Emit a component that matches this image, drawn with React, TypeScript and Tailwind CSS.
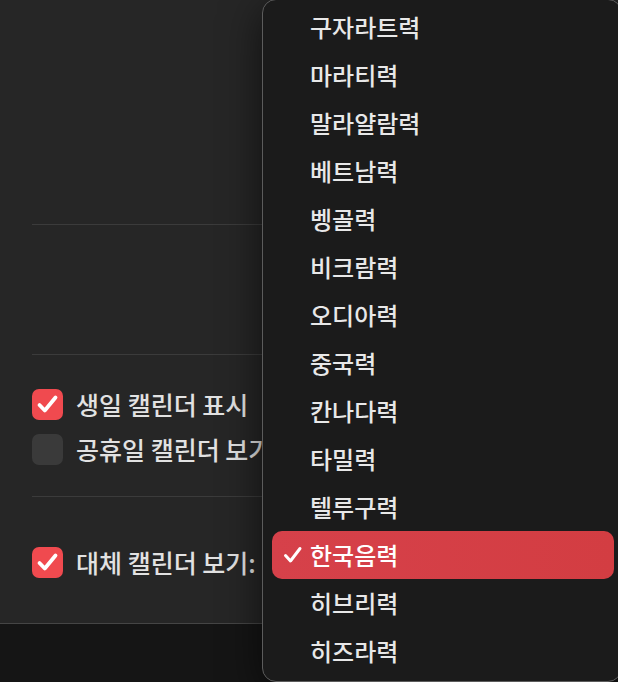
const calendars = [
  '구자라트력',
  '마라티력',
  '말라얄람력',
  '베트남력',
  '벵골력',
  '비크람력',
  '오디아력',
  '중국력',
  '칸나다력',
  '타밀력',
  '텔루구력',
  '한국음력',
  '히브리력',
  '히즈라력',
];

const selected = '한국음력';

function Checkbox({ checked }: { checked: boolean }) {
  if (!checked) {
    return <div className="w-[31px] h-[31px] rounded-[7px] bg-[#3a3a3a] shrink-0" />;
  }
  return (
    <div className="w-[31px] h-[31px] rounded-[7px] bg-[#f04a4f] shrink-0">
      <svg width="31" height="31" viewBox="0 0 31 31" fill="none">
        <path d="M7.5 16 L12.8 21.5 L23.5 8.5" stroke="white" strokeWidth="3.8" strokeLinecap="round" strokeLinejoin="round" />
      </svg>
    </div>
  );
}

function Row({ checked, label }: { checked: boolean; label: string }) {
  return (
    <div className="flex items-center h-[31px] gap-[13px]">
      <Checkbox checked={checked} />
      <span className="text-[25px] leading-none font-medium text-[#e2e2e2] whitespace-nowrap">{label}</span>
    </div>
  );
}

export default function App() {
  return (
    <div
      className="relative w-[618px] h-[682px] overflow-hidden bg-[#151515]"
      style={{ fontFamily: '"Noto Sans CJK KR", "Noto Sans", sans-serif' }}
    >
      {/* settings window */}
      <div className="h-[624px] bg-[#262626] border-b border-[#454545] pl-[32px] flex flex-col">
        <div className="h-[224px]" />
        <div className="h-px bg-[#3b3b3b]" />
        <div className="h-[129px]" />
        <div className="h-px bg-[#3b3b3b]" />
        <div className="pt-[34px] pb-[31px] flex flex-col gap-[14px]">
          <Row checked label="생일 캘린더 표시" />
          <Row checked={false} label="공휴일 캘린더 보기" />
        </div>
        <div className="h-px bg-[#3b3b3b]" />
        <div className="pt-[50px]">
          <Row checked label="대체 캘린더 보기:" />
        </div>
      </div>

      {/* popup menu */}
      <div className="absolute left-[262px] top-[-1px] w-[360px] h-[683px] rounded-[14px] border border-[#5c5c5c] bg-[#1b1b1b] shadow-[0_10px_40px_rgba(0,0,0,0.6)] px-[9px] pt-[3px]">
        {calendars.map((name) => {
          const active = name === selected;
          return (
            <div
              key={name}
              className={
                active
                  ? 'h-[48px] w-[342px] rounded-[10px] bg-gradient-to-r from-[#d6414a] to-[#d33d42] flex items-center text-white'
                  : 'h-[48px] w-[342px] flex items-center text-[#e8e8e8]'
              }
            >
              <div className="w-[38px] flex items-center justify-center pl-[4px]">
                {active && (
                  <svg width="20" height="20" viewBox="0 0 20 20" fill="none">
                    <path d="M2.5 10.5 L7.5 16 L17 3.5" stroke="white" strokeWidth="3" strokeLinecap="round" strokeLinejoin="round" />
                  </svg>
                )}
              </div>
              <span className="text-[24px] leading-none font-medium whitespace-nowrap">{name}</span>
            </div>
          );
        })}
      </div>
    </div>
  );
}
